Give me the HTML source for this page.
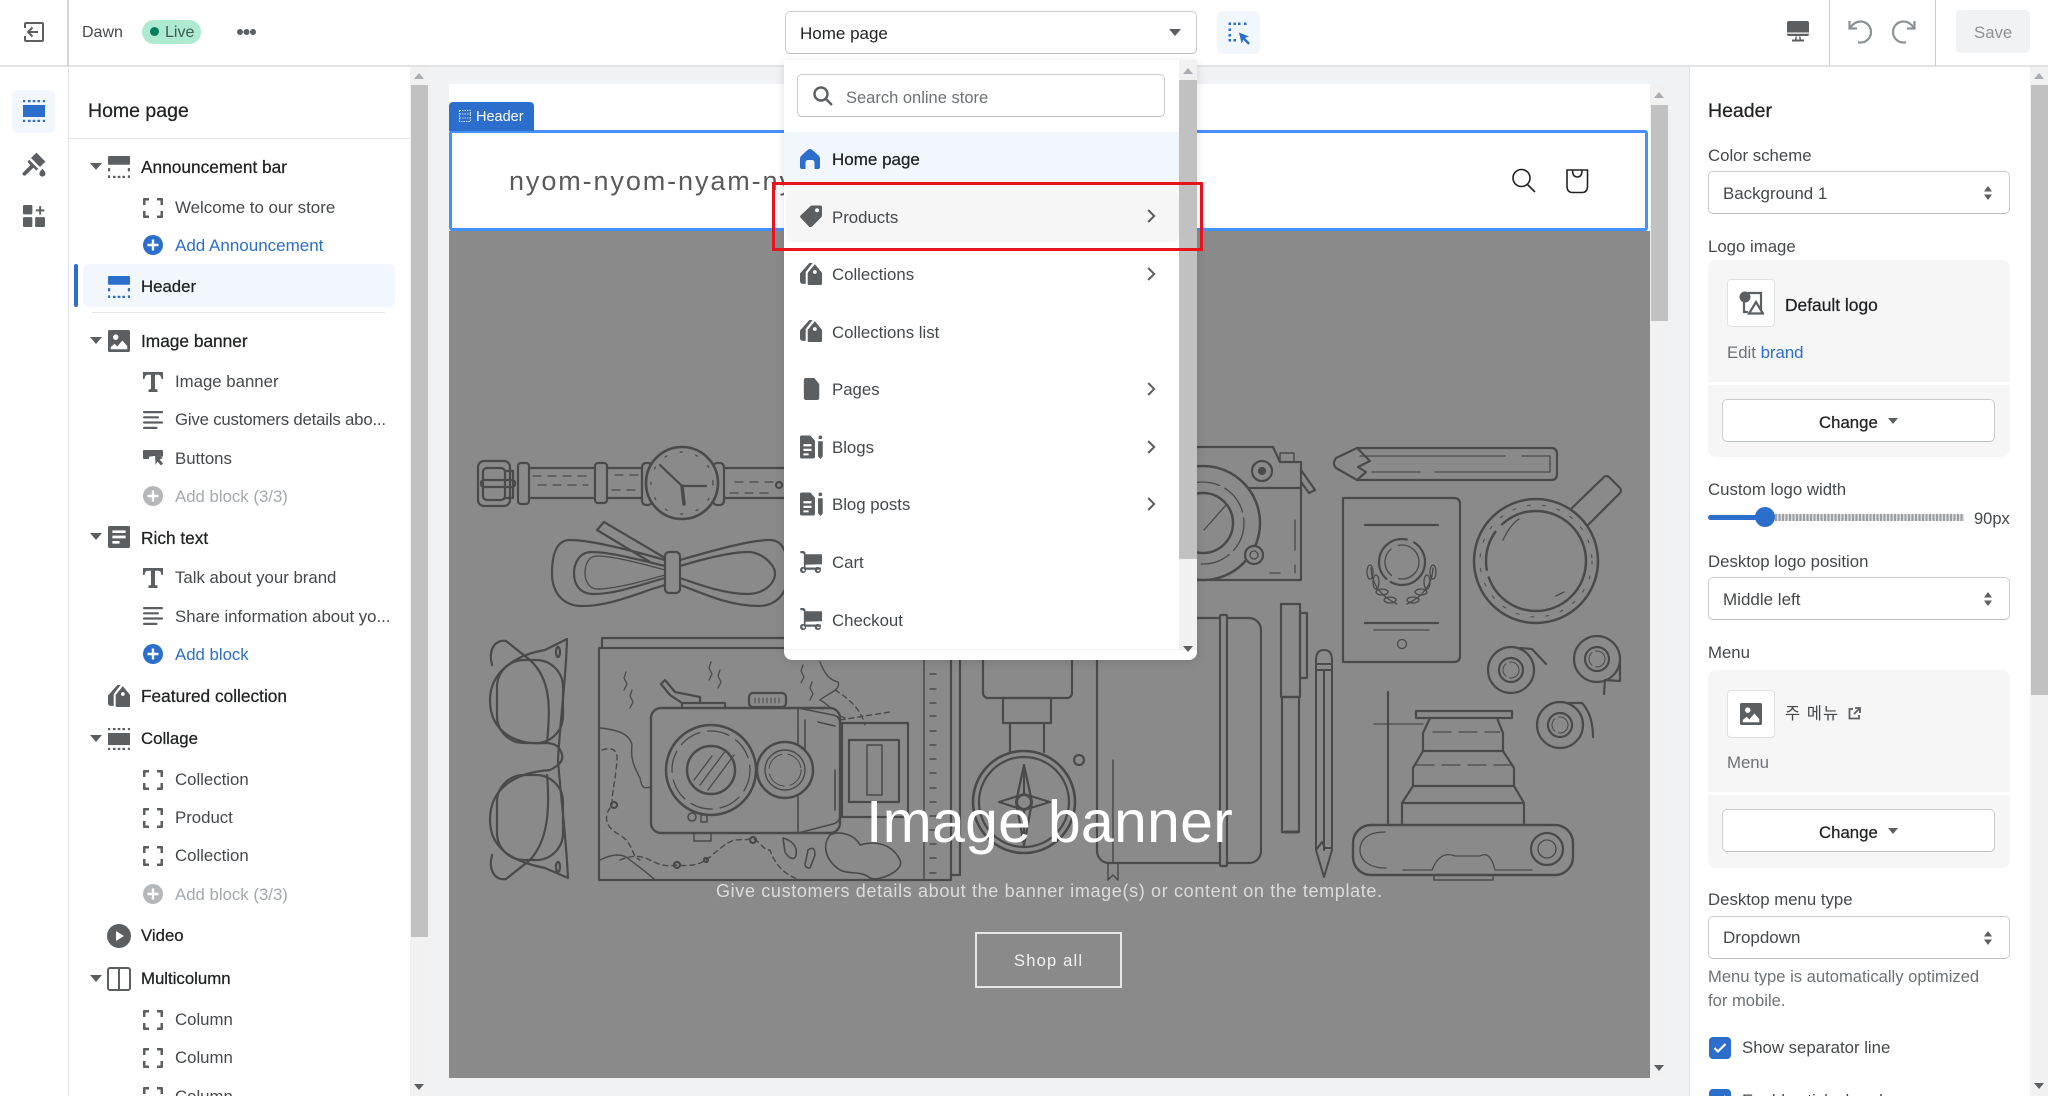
<!DOCTYPE html>
<html lang="en"><head><meta charset="utf-8"><title>Theme editor</title>
<style>
*{box-sizing:border-box}
html,body{margin:0;padding:0;width:2048px;height:1096px;overflow:hidden;background:#fff;font-family:"Liberation Sans","Noto Sans CJK KR",sans-serif;color:#202223}
body{position:relative}
.a{position:absolute}
.t{position:absolute;white-space:nowrap;line-height:20px;height:20px;margin-top:-10px;font-size:16.8px;color:#45484b}
.h{color:#202223;-webkit-text-stroke:.25px #202223;font-size:17.3px}
.b{color:#2c6ecb;font-size:17px}
.g{color:#a4a8ac}
.l{color:#45484b}
svg.i{position:absolute;fill:#5c5f62;overflow:visible}
.sel{position:absolute;background:#fff;border:1px solid #c9cccf;border-bottom-color:#babfc3;border-radius:5px}
.arr{position:absolute;width:0;height:0;border-left:6px solid transparent;border-right:6px solid transparent;border-top:7px solid #5c5f62}
.up{position:absolute;width:0;height:0;border-left:5px solid transparent;border-right:5px solid transparent;border-bottom:6px solid #a9adb1}
.dn{position:absolute;width:0;height:0;border-left:5px solid transparent;border-right:5px solid transparent;border-top:6px solid #5c5f62}
</style></head><body>
<svg width="0" height="0" style="position:absolute"><defs>
<symbol id="hdr" viewBox="0 0 20 20"><rect width="20" height="8" rx="1"/><rect y="11" width="2" height="3"/><rect x="18" y="11" width="2" height="3"/><rect y="17.5" width="2" height="2.5" rx=".7"/><rect x="4.5" y="18" width="2.4" height="2"/><rect x="8.8" y="18" width="2.4" height="2"/><rect x="13.1" y="18" width="2.4" height="2"/><rect x="18" y="17.5" width="2" height="2.5" rx=".7"/></symbol>
<symbol id="mid" viewBox="0 0 20 20"><rect y="0" width="2" height="2"/><rect x="4.5" y="0" width="2.4" height="2"/><rect x="8.8" y="0" width="2.4" height="2"/><rect x="13.1" y="0" width="2.4" height="2"/><rect x="18" y="0" width="2" height="2"/><rect y="4.5" width="20" height="11"/><rect y="18" width="2" height="2"/><rect x="4.5" y="18" width="2.4" height="2"/><rect x="8.8" y="18" width="2.4" height="2"/><rect x="13.1" y="18" width="2.4" height="2"/><rect x="18" y="18" width="2" height="2"/></symbol>
<symbol id="blk" viewBox="0 0 20 20"><path d="M0 7V1q0-1 1-1h5v2.5H2.5V7zM14 0h5q1 0 1 1v6h-2.500V2.500H14zM0 13h2.500v4.500H6V20H1q-1 0-1-1zM17.500 13H20v6q0 1-1 1h-5v-2.500h3.500z"/></symbol>
<symbol id="plus" viewBox="0 0 20 20"><path fill-rule="evenodd" d="M10 0a10 10 0 1 1 0 20a10 10 0 0 1 0-20zM8.800 4.500v4.300H4.500v2.400h4.300v4.300h2.400v-4.300h4.300V8.800h-4.300V4.500z"/></symbol>
<symbol id="img" viewBox="0 0 20 20"><path fill-rule="evenodd" d="M1.500 0h17Q20 0 20 1.500v17q0 1.500-1.500 1.500h-17Q0 20 0 18.500v-17Q0 0 1.500 0zM7 4a2.500 2.500 0 1 0 0 5a2.500 2.500 0 0 0 0-5zM2.500 17.500h15v-3L13 9.500 8.500 15 6 12.500l-3.500 3z"/></symbol>
<symbol id="T" viewBox="0 0 20 20"><path d="M0 0h20v7h-1.500q-.5-4-3-4.200H12V17l2.500.5V20h-9v-2.500L8 17V2.800H4.500q-2.500.2-3 4.200H0z"/></symbol>
<symbol id="lines" viewBox="0 0 20 20"><rect y="1" width="20" height="2.200" rx="1"/><rect y="6.200" width="16" height="2.200" rx="1"/><rect y="11.400" width="20" height="2.200" rx="1"/><rect y="16.800" width="14.500" height="2.200" rx="1"/></symbol>
<symbol id="btn" viewBox="0 0 20 20"><path d="M1 2h18q1 0 1 1v5.500l-3 .5-1.500-1.500L6 8.800V11H1q-1 0-1-1V3q0-1 1-1z"/><path d="M12 6l8 4-3.300 1.500L20 15.500 18 17.500l-3.500-4L12.500 17z"/></symbol>
<symbol id="rich" viewBox="0 0 20 20"><path fill-rule="evenodd" d="M1.500 0h17Q20 0 20 1.500v17q0 1.500-1.500 1.500h-17Q0 20 0 18.500v-17Q0 0 1.500 0zM4 4v2.400h12V4zM4 8.800v2.400h12V8.800zM4 13.600V16h6.500v-2.400z"/></symbol>
<symbol id="coll" viewBox="0 0 20 20"><path fill-rule="evenodd" d="M13.500 1L20 9v10q0 1-1 1H8q-1 0-1-1V9zM13.500 6.500a1.700 1.700 0 1 0 0 3.400a1.700 1.700 0 0 0 0-3.400z"/><path d="M8.500 0h3L5.200 8.200V19H3q-3 0-3-2.500V9.500z"/></symbol>
<symbol id="tag" viewBox="0 0 20 20"><path fill-rule="evenodd" d="M.5 9.500l9-8.500Q10 .5 11 .5h7.500Q20 .5 20 2v7.500q0 1-.7 1.700L10.500 20q-1 .7-2 0L.5 11.500q-.8-1 0-2zM15.500 3a1.800 1.800 0 1 0 0 3.600a1.800 1.800 0 0 0 0-3.600z"/></symbol>
<symbol id="page" viewBox="0 0 20 20"><path d="M3.500 2Q3.500 0 5.500 0H13l4.500 5.500V18q0 2-2 2h-10q-2 0-2-2z"/></symbol>
<symbol id="blog" viewBox="0 0 20 20"><path fill-rule="evenodd" d="M1.500 0H9l4 4.500V18.500Q13 20 11.500 20h-10Q0 20 0 18.500v-17Q0 0 1.500 0zM3 7.500v2h7v-2zM3 11.500v2h7v-2zM3 15.500v1.800h4.500v-1.800z"/><circle cx="17.700" cy="1.600" r="1.600"/><path d="M15.700 5h4.100v13l-2 2.500-2.100-2.500z"/></symbol>
<symbol id="cart" viewBox="0 0 20 20"><path d="M.3 0H3.500L5 1.500V3h15v9l-15 .5V15h14v2H3.500V3L2.500 2H.3z"/><path fill-rule="evenodd" d="M3.300 14.500a2.800 2.800 0 1 0 0 5.500a2.800 2.800 0 0 0 0-5.500zM3.300 16a1.200 1.200 0 1 1 0 2.400a1.200 1.200 0 0 1 0-2.400zM16.700 14.500a2.800 2.800 0 1 0 0 5.500a2.800 2.800 0 0 0 0-5.500zM16.700 16a1.200 1.200 0 1 1 0 2.400a1.200 1.200 0 0 1 0-2.400z"/></symbol>
<symbol id="home" viewBox="0 0 20 20"><path d="M10 0q1.500 0 3 1.500l5 4.500q2 1.500 2 4v8q0 2-2 2h-3.500v-6q0-3-2.500-3H8q-2.500 0-2.500 3v6H2q-2 0-2-2v-8q0-2.500 2-4l5-4.500Q8.500 0 10 0z"/></symbol>
<symbol id="chev" viewBox="0 0 9 14"><path d="M1.200 1l6 6-6 6" fill="none" stroke="#5c5f62" stroke-width="2"/></symbol>
<symbol id="sarr" viewBox="0 0 10 18" preserveAspectRatio="none"><path d="M5 0l5 7H0zM0 11h10l-5 7z" fill="#5c5f62"/></symbol>
</defs></svg>

<!-- preview background -->
<div class="a" style="left:428px;top:66px;width:1262px;height:1030px;background:#f1f2f4"></div>
<div class="a" style="left:449px;top:84px;width:1220px;height:994px;background:#fff;border-bottom:1px solid #d8dadc"></div>
<div class="a" style="left:449px;top:231px;width:1201px;height:847px;background:#8a8a8a"></div>

<!-- illustration -->
<svg class="a" style="left:0;top:0" width="2048" height="1096" viewBox="0 0 2048 1096" fill="none" stroke="#4a4a4a" stroke-width="2.200" stroke-linecap="round" stroke-linejoin="round">
<!-- belt and watch -->
<rect x="478" y="461" width="32" height="45" rx="6"/><rect x="483" y="468" width="22" height="32" rx="4"/><rect x="481" y="480" width="34" height="7" rx="3"/><path d="M505 471h8v27h-8"/>
<rect x="518" y="463" width="11" height="41" rx="3"/><rect x="595" y="463" width="12" height="40" rx="3"/>
<path d="M529 468h66M529 498h66M607 468h35M607 498h35M724 468h66M724 498h66"/>
<path d="M533 476h60M538 485h50M615 475h25M612 490h25M735 482h40M730 493h40" stroke-width="1.300" stroke-dasharray="8 7"/>
<rect x="642" y="463" width="10" height="42" rx="4"/><rect x="713" y="463" width="11" height="42" rx="4"/>
<circle cx="682" cy="483" r="36" stroke-width="2.600" fill="#8a8a8a"/><circle cx="682" cy="483" r="31" stroke-width="1.300" stroke-dasharray="2 14"/>
<path d="M660 465l22 21h24" /><path d="M682 486l2 18" stroke-width="3.500"/><circle cx="779" cy="485" r="3"/>
<!-- bow -->
<path d="M665 560C630 550 590 540 570 540C555 540 552 558 552 573C552 595 565 606 582 606C612 606 640 592 665 585"/>
<path d="M665 566C640 560 610 552 592 552C578 552 574 565 574 573C574 585 580 594 594 594C615 594 640 585 665 578"/>
<path d="M665 570C640 563 612 556 597 556C588 556 585 565 585 573C585 582 590 589 597 589C615 589 640 582 665 575" stroke-width="1.300"/>
<path d="M680 560C715 550 750 540 770 540C785 540 788 558 788 573C788 595 775 606 758 606C728 606 700 592 680 585"/>
<path d="M680 566C700 560 730 552 748 552C762 552 775 565 775 573C775 585 762 594 748 594C725 594 700 585 680 578"/>
<rect x="665" y="552" width="15" height="41" rx="4" fill="#8a8a8a"/>
<path d="M665 558L604 522L597 530L650 562"/>
<!-- glasses -->
<path d="M567 639L545 650C515 655 490 672 490 700C490 735 520 745 545 743C553 743 558 745 560 750C565 758 562 764 550 770C520 772 490 785 490 820C490 850 515 862 545 868L568 878C566 835 560 790 558 760C560 720 566 680 567 639Z"/>
<rect x="497" y="660" width="66" height="83" rx="27"/><rect x="497" y="775" width="66" height="85" rx="27"/>
<path d="M506 641C495 639 488 650 492 665M506 641L530 660C552 680 550 710 547 743M506 879C495 881 488 870 492 855M506 879L530 860C548 840 550 810 547 775"/>
<ellipse cx="558" cy="652" rx="2" ry="5"/><ellipse cx="558" cy="867" rx="2" ry="5"/>
<!-- map notebook -->
<rect x="599" y="648" width="352" height="232"/><path d="M602 648V638H960V875H951"/><path d="M924 648V880" stroke-width="1.500"/>
<path d="M930 674h6M930 689h6M930 703h6M930 716h6M930 731h6M930 745h6M930 759h6M930 773h6M930 788h6M930 802h6M930 816h6M930 830h6M930 844h6M930 858h6M930 873h6" stroke-width="1.500"/>
<path d="M626 672l-2 6 3 6-3 6M632 690l-2 6 3 6-3 6M711 662l-2 6 3 6-3 6M720 670l-2 6 3 6-3 6M803 665l-2 6 3 6-3 6M812 682l-2 6 3 6-3 6" stroke-width="1.300"/>
<path d="M600 728C620 730 630 735 632 745C630 760 635 768 640 778C642 790 645 788 651 787M600 860Q620 850 630 860Q650 875 655 880M820 662C825 675 830 680 838 682C842 690 825 695 820 700C830 705 835 715 845 718" stroke-width="1.400"/>
<path d="M602 750Q618 745 617 760C615 785 612 790 612 805C600 820 610 830 620 835C635 845 630 855 640 860M620 860C650 848 650 870 677 865Q700 868 712 855C725 845 730 838 745 840C760 835 760 850 770 850C775 865 785 875 800 880M835 690Q860 705 865 725M840 720L890 712" stroke-width="1.400" stroke-dasharray="5 4"/>
<path d="M783 838C790 840 798 845 796 855C795 860 790 860 785 852ZM808 850Q815 845 815 855L810 868Q803 868 806 860ZM830 835C840 830 855 835 860 845C870 842 890 840 900 860C905 870 880 882 870 878C860 870 850 875 840 870C825 860 822 845 830 835Z" stroke-width="1.600"/>
<circle cx="614" cy="805" r="3"/><circle cx="677" cy="865" r="3"/><circle cx="706" cy="860" r="2"/><circle cx="753" cy="840" r="3"/>
<!-- camera left -->
<rect x="651" y="708" width="189" height="125" rx="10" stroke-width="2.400" fill="#8a8a8a"/>
<path d="M798 708L833 715Q840 716 840 725V815Q840 822 833 824L798 833V708M805 720V770M818 722L835 726M835 770V810" stroke-width="1.600"/>
<path d="M682 708V703H725V708M682 703L670 695L661 684L665 680L675 692L700 697V703"/>
<rect x="749" y="693" width="37" height="14" rx="4"/><path d="M755 698v5M759 698v5M763 698v5M767 698v5M771 698v5M775 698v5M779 698v5" stroke-width="1"/>
<circle cx="711" cy="770" r="45" stroke-width="2.500" fill="#8a8a8a"/><circle cx="711" cy="770" r="39" stroke-width="1.300" stroke-dasharray="22 8"/><circle cx="711" cy="770" r="24" stroke-width="2.500"/>
<path d="M700 785L726 750M708 790L734 755M694 780L712 756" stroke-width="1.300"/>
<circle cx="785" cy="770" r="28" stroke-width="2.500" fill="#8a8a8a"/><circle cx="785" cy="770" r="20" stroke-width="1.400"/><circle cx="785" cy="770" r="16" stroke-width="1" stroke-dasharray="20 6"/>
<rect x="842" y="723" width="66" height="94"/><rect x="849" y="740" width="50" height="62"/><rect x="867" y="745" width="15" height="50" stroke-width="1.500"/>
<rect x="694" y="833" width="17" height="8" stroke-width="1.500"/><circle cx="692" cy="817" r="4" stroke-width="1.500"/><rect x="701" y="815" width="6" height="7" stroke-width="1.500"/>
<!-- flashlight & compass -->
<rect x="983" y="655" width="89" height="43" rx="5"/><rect x="1003" y="698" width="48" height="25"/><path d="M1010 723V752M1044 723V752" />
<circle cx="1024" cy="802" r="51" stroke-width="2.600" fill="#8a8a8a"/><circle cx="1024" cy="802" r="45"/>
<path d="M1024 765L1032 802L1024 845L1016 802ZM1024 765V845" /><path d="M999 802L1024 794L1050 802L1024 810Z"/><circle cx="1024" cy="802" r="7" fill="#8a8a8a"/><circle cx="1079" cy="760" r="5"/>
<!-- notebook -->
<rect x="1097" y="618" width="164" height="245" rx="12"/><rect x="1220" y="615" width="7" height="251" rx="1" fill="#8a8a8a"/><path d="M1108 863V880L1113 875L1118 880V863M1113 760V863" stroke-width="1.500"/>
<!-- pen & pencil -->
<rect x="1281" y="604" width="19" height="93"/><rect x="1282" y="697" width="17" height="135"/><rect x="1300" y="613" width="7" height="65"/><path d="M1285 832h13" stroke-width="3"/>
<path d="M1316 660Q1316 650 1324 650Q1332 650 1332 660V850L1324 877L1316 850ZM1316 664H1332M1316 670H1332M1324 670V850M1316 850L1322 842L1325 848L1332 848" stroke-width="2"/>
<!-- long pencil -->
<path d="M1357 448H1551Q1557 448 1557 454V474Q1557 480 1551 480H1357L1336 468Q1332 464 1336 458Z"/><path d="M1357 448L1370 461L1358 467L1366 472L1357 480"/><path d="M1360 456H1505M1522 456H1550V472H1435M1420 472H1372" stroke-width="1.300"/>
<!-- passport -->
<path d="M1343 498H1454Q1460 498 1460 504V656Q1460 662 1454 662H1343Z"/><path d="M1365 525H1438M1365 623H1438" /><path d="M1374 630H1429" stroke-width="1.300"/><circle cx="1402" cy="644" r="4.500" stroke-width="1.300"/>
<circle cx="1402" cy="562" r="23" stroke-dasharray="48 5 60 8"/><circle cx="1402" cy="562" r="17" stroke-width="1.300" stroke-dasharray="30 8"/>
<path d="M1371 568Q1372 592 1397 604M1433 568Q1432 592 1407 604" stroke-width="1.300"/>
<g stroke-width="1.300"><ellipse cx="1370" cy="572" rx="3" ry="7"/><ellipse cx="1376" cy="582" rx="3" ry="7"/><ellipse cx="1382" cy="592" rx="6" ry="3"/><ellipse cx="1390" cy="600" rx="6" ry="3"/><ellipse cx="1433" cy="572" rx="3" ry="7"/><ellipse cx="1427" cy="582" rx="3" ry="7"/><ellipse cx="1421" cy="592" rx="6" ry="3"/><ellipse cx="1413" cy="600" rx="6" ry="3"/></g>
<!-- mug -->
<path d="M1572 508L1604 477Q1606 475 1609 477L1620 488Q1622 491 1620 493L1588 525"/><circle cx="1536" cy="561" r="62" stroke-width="2.500"/><circle cx="1536" cy="561" r="50" stroke-width="2.500" stroke-dasharray="140 8 40 10"/><circle cx="1536" cy="561" r="56" stroke-width="1" stroke-dasharray="3 12"/>
<path d="M1503 540Q1510 525 1519 519M1556 596L1564 592" stroke-width="1.300"/>
<!-- tape rolls -->
<circle cx="1511" cy="670" r="23"/><circle cx="1511" cy="670" r="12"/><circle cx="1511" cy="670" r="8" stroke-width="1" stroke-dasharray="14 4"/><path d="M1520 648L1532 649L1546 664"/>
<circle cx="1597" cy="659" r="23"/><circle cx="1597" cy="659" r="12"/><circle cx="1597" cy="659" r="8" stroke-width="1" stroke-dasharray="14 4"/><path d="M1620 660L1620 681L1605 680L1604 694"/>
<circle cx="1560" cy="725" r="23"/><circle cx="1560" cy="725" r="12"/><circle cx="1560" cy="725" r="8" stroke-width="1" stroke-dasharray="14 4"/><path d="M1569 703L1582 703Q1593 715 1593 737"/>
<!-- lens camera -->
<rect x="1353" y="825" width="220" height="50" rx="18" stroke-width="2.400"/>
<path d="M1416 711H1512V718H1416ZM1430 718L1423 733V751H1503V733L1497 718M1423 751L1413 768V786H1514V768L1503 751M1413 786L1402 803V825M1514 786L1524 803V825M1402 803H1524" /><path d="M1433 732H1500M1416 765H1512" stroke-width="1.200" stroke-dasharray="18 8"/>
<path d="M1388 692V825" /><path d="M1374 724H1423" stroke-width="1.200"/>
<circle cx="1547" cy="849" r="16"/><circle cx="1547" cy="849" r="9" stroke-width="1.300"/>
<path d="M1385 832C1365 832 1360 842 1360 850C1360 862 1372 868 1385 868H1386M1403 870H1432Q1440 850 1455 856H1480Q1490 850 1495 870H1532" stroke-width="1.300"/>
<path d="M1434 875H1493V880H1434Z" stroke-width="1.500"/>
<!-- camera right -->
<path d="M1197 447H1273L1280 462H1301V580H1197M1197 488H1301"/><rect x="1280" y="453" width="14" height="9" stroke-width="1.500"/><circle cx="1262" cy="471" r="10"/><circle cx="1262" cy="471" r="3" fill="#4a4a4a"/><path d="M1301 470L1315 490L1309 493L1301 482"/>
<circle cx="1203" cy="523" r="57" stroke-width="2.500" fill="#8a8a8a"/><circle cx="1203" cy="523" r="41" stroke-width="1.300" stroke-dasharray="30 6"/><circle cx="1203" cy="523" r="30" stroke-width="2.500"/><circle cx="1254" cy="555" r="9" fill="#8a8a8a"/><circle cx="1254" cy="555" r="4" stroke-width="1.300"/>
<path d="M1204 530L1226 505" stroke-width="1.300"/><path d="M1295 520V550M1295 565v8M1270 573h10" stroke-width="1.300"/>
</svg>

<!-- banner text -->
<div class="t" style="left:866px;top:822px;height:70px;line-height:70px;margin-top:-35px;font-size:59px;color:#fff;letter-spacing:.25px;font-weight:400">Image banner</div>
<div class="t" style="left:716px;top:891px;font-size:18px;color:#dcdcdc;letter-spacing:.65px">Give customers details about the banner image(s) or content on the template.</div>
<div class="a" style="left:975px;top:932px;width:147px;height:56px;border:2px solid #e6e6e6"></div>
<div class="t" style="left:1014px;top:961px;font-size:16.500px;color:#f2f2f2;letter-spacing:1.200px">Shop all</div>

<!-- preview scrollbar -->
<div class="a" style="left:1650px;top:84px;width:19px;height:994px;background:#f1f1f1"></div>
<div class="a" style="left:1651px;top:105px;width:17px;height:216px;background:#c1c1c1"></div>
<div class="up" style="left:1654px;top:92px"></div><div class="dn" style="left:1654px;top:1065px"></div>

<!-- header section -->
<div class="a" style="left:449px;top:130px;width:1199px;height:101px;background:#fff;border:3px solid #458fff;border-radius:3px"></div>
<div class="a" style="left:449px;top:102px;width:85px;height:29px;background:#2c6ecb;border-radius:4px 4px 0 0"></div>
<svg class="a" style="left:459px;top:110px" width="12" height="12" viewBox="0 0 12 12" fill="none" stroke="#cfe0f7" stroke-width="1.100" stroke-dasharray="1.500 1"><rect x=".5" y=".5" width="11" height="11"/><path d="M.5 4h11M.5 8h11"/></svg>
<div class="t" style="left:476px;top:117px;font-size:14.500px;color:#fff">Header</div>
<div class="t" style="left:509px;top:181px;font-size:27px;height:34px;line-height:34px;margin-top:-17px;color:#5a5a5a;letter-spacing:1.900px">nyom-nyom-nyam-nyam</div>
<svg class="a" style="left:1511px;top:168px" width="25" height="25" viewBox="0 0 25 25" fill="none" stroke="#222" stroke-width="1.600"><circle cx="10.500" cy="10" r="8.500"/><path d="M16.500 16.500l7.500 7.500"/></svg>
<svg class="a" style="left:1565px;top:168px" width="25" height="26" viewBox="0 0 25 26" fill="none" stroke="#222" stroke-width="1.600"><path d="M2 2H22.500V18Q22.500 24.500 17 24.500H7.500Q2 24.500 2 18Z"/><path d="M7.500 2Q7.500 9 12.500 9Q17 9 17 2"/></svg>

<!-- top bar -->
<div class="a" style="left:0;top:0;width:2048px;height:67px;background:#fff;border-bottom:2px solid #e1e3e5"></div>
<div class="a" style="left:67px;top:0;width:2px;height:66px;background:#d2d5d8"></div>
<svg class="a" style="left:24px;top:22px" width="20" height="20" viewBox="0 0 20 20" fill="none" stroke="#5c5f62" stroke-width="2"><path d="M1 6V2q0-1 1-1h16q1 0 1 1v16q0 1-1 1H2q-1 0-1-1v-4"/><path d="M14 10H4M8.500 5.500L4 10l4.500 4.500"/></svg>
<div class="t" style="left:82px;top:33px;font-size:16px">Dawn</div>
<div class="a" style="left:142px;top:20px;width:59px;height:24px;background:#aee9d1;border-radius:12px"></div>
<div class="a" style="left:150px;top:27px;width:9px;height:9px;background:#007f5f;border-radius:50%"></div>
<div class="t" style="left:165px;top:33px;font-size:16px;color:#3f5a50">Live</div>
<svg class="a" style="left:236px;top:28px" width="21" height="8" fill="#5c5f62"><circle cx="4" cy="4" r="3"/><circle cx="10.500" cy="4" r="3"/><circle cx="17" cy="4" r="3"/></svg>

<div class="a" style="left:1829px;top:0;width:1px;height:66px;background:#c9cccf"></div>
<div class="a" style="left:1935px;top:0;width:1px;height:66px;background:#c9cccf"></div>
<svg class="i" style="left:1787px;top:21px" width="22" height="22" viewBox="0 0 22 22"><path fill-rule="evenodd" d="M2 0h18q2 0 2 2v11q0 2-2 2H2q-2 0-2-2V2q0-2 2-2zM0 11.500v1.200h22v-1.200z"/><path d="M8.500 15.500h1.500l-.5 3h3l-.5-3h1.500l.5 3H17v2H5v-2h3z"/></svg>
<svg class="a" style="left:1848px;top:20px" width="26" height="24" viewBox="0 0 26 24" fill="none" stroke="#8c9196" stroke-width="2.200"><path d="M1.500 1v7.500H9"/><path d="M2 8C5 3.500 9 1.500 12.500 1.500a10.500 10.500 0 0 1 0 21H10"/></svg>
<svg class="a" style="left:1890px;top:20px" width="26" height="24" viewBox="0 0 26 24" fill="none" stroke="#8c9196" stroke-width="2.200"><path d="M24.500 1v7.500H17"/><path d="M24 8C21 3.500 17 1.500 13.500 1.500a10.500 10.500 0 0 0 0 21H16"/></svg>
<div class="a" style="left:1956px;top:10px;width:74px;height:43px;background:#f1f2f3;border-radius:5px"></div>
<div class="t" style="left:1974px;top:33px;font-size:16.800px;color:#8c9196">Save</div>

<!-- left rail -->
<div class="a" style="left:12px;top:90px;width:43px;height:43px;background:#f2f7fe;border-radius:6px"></div>
<svg class="i" style="left:23px;top:100px;fill:#2c6ecb" width="22" height="22"><use href="#mid"/></svg>
<svg class="i" style="left:22px;top:152px" width="24" height="24" viewBox="0 0 20 20"><path d="M7.500 5L12 .5 19.500 8 15 12.500z"/><path d="M6 6.500L13.500 14 12 15.500 9.500 13 3 19.500Q1.500 20 .5 19 0 18 1 17L7 11 4.500 8z"/><path d="M17 14q2.500 2.500 2.500 4a2.500 2.500 0 0 1-5 0q0-1.500 2.500-4z"/></svg>
<svg class="i" style="left:23px;top:205px" width="22" height="22" viewBox="0 0 20 20"><rect width="8.500" height="8.500" rx="1"/><rect y="11" width="8.500" height="9" rx="1"/><rect x="11" y="11" width="9" height="9" rx="1"/><path d="M14.700 1h1.800v3h3v1.800h-3v3h-1.800v-3h-3V4h3z"/></svg>

<!-- left panel -->
<div class="a" style="left:68px;top:67px;width:360px;height:1029px;background:#fff;border-left:1px solid #e1e3e5"></div>
<div class="t h" style="left:88px;top:111px;font-size:19.500px">Home page</div>
<div class="a" style="left:69px;top:138px;width:341px;height:1px;background:#e1e3e5"></div>

<div class="arr" style="left:90px;top:163px"></div><svg class="i" style="left:108px;top:156px" width="22" height="22"><use href="#hdr"/></svg><div class="t h" style="left:141px;top:167px">Announcement bar</div>
<svg class="i" style="left:143px;top:198px" width="20" height="20"><use href="#blk"/></svg><div class="t" style="left:175px;top:208px;font-size:16.900px">Welcome to our store</div>
<svg class="i" style="left:143px;top:235px;fill:#2c6ecb" width="20" height="20"><use href="#plus"/></svg><div class="t b" style="left:175px;top:246px">Add Announcement</div>
<div class="a" style="left:83px;top:264px;width:312px;height:43px;background:#f2f7fe;border-radius:6px"></div><div class="a" style="left:74px;top:264px;width:3.500px;height:43px;background:#2c6ecb;border-radius:2px"></div>
<svg class="i" style="left:108px;top:276px;fill:#2c6ecb" width="22" height="22"><use href="#hdr"/></svg><div class="t h" style="left:141px;top:287px;font-size:16.800px">Header</div>
<div class="a" style="left:92px;top:312px;width:293px;height:1px;background:#e1e3e5"></div>
<div class="arr" style="left:90px;top:337px"></div><svg class="i" style="left:108px;top:330px" width="22" height="22"><use href="#img"/></svg><div class="t h" style="left:141px;top:341px">Image banner</div>
<svg class="i" style="left:143px;top:372px" width="20" height="20"><use href="#T"/></svg><div class="t" style="left:175px;top:382px">Image banner</div>
<svg class="i" style="left:143px;top:410px" width="20" height="20"><use href="#lines"/></svg><div class="t" style="left:175px;top:420px;letter-spacing:-.19px">Give customers details abo...</div>
<svg class="i" style="left:143px;top:448px" width="20" height="20"><use href="#btn"/></svg><div class="t" style="left:175px;top:459px">Buttons</div>
<svg class="i" style="left:143px;top:486px;fill:#b5b8bb" width="20" height="20"><use href="#plus"/></svg><div class="t g" style="left:175px;top:497px">Add block (3/3)</div>
<div class="arr" style="left:90px;top:533px"></div><svg class="i" style="left:108px;top:526px" width="22" height="22"><use href="#rich"/></svg><div class="t h" style="left:141px;top:538px">Rich text</div>
<svg class="i" style="left:143px;top:568px" width="20" height="20"><use href="#T"/></svg><div class="t" style="left:175px;top:578px">Talk about your brand</div>
<svg class="i" style="left:143px;top:606px" width="20" height="20"><use href="#lines"/></svg><div class="t" style="left:175px;top:617px">Share information about yo...</div>
<svg class="i" style="left:143px;top:644px;fill:#2c6ecb" width="20" height="20"><use href="#plus"/></svg><div class="t b" style="left:175px;top:655px;font-size:16.800px">Add block</div>
<svg class="i" style="left:108px;top:684px" width="22" height="24"><use href="#coll"/></svg><div class="t h" style="left:141px;top:696px">Featured collection</div>
<div class="arr" style="left:90px;top:735px"></div><svg class="i" style="left:108px;top:728px" width="22" height="22"><use href="#mid"/></svg><div class="t h" style="left:141px;top:739px;font-size:16.800px">Collage</div>
<svg class="i" style="left:143px;top:770px" width="20" height="20"><use href="#blk"/></svg><div class="t" style="left:175px;top:780px">Collection</div>
<svg class="i" style="left:143px;top:808px" width="20" height="20"><use href="#blk"/></svg><div class="t" style="left:175px;top:818px">Product</div>
<svg class="i" style="left:143px;top:846px" width="20" height="20"><use href="#blk"/></svg><div class="t" style="left:175px;top:856px">Collection</div>
<svg class="i" style="left:143px;top:884px;fill:#b5b8bb" width="20" height="20"><use href="#plus"/></svg><div class="t g" style="left:175px;top:895px">Add block (3/3)</div>
<svg class="i" style="left:107px;top:924px" width="24" height="24" viewBox="0 0 24 24"><path fill-rule="evenodd" d="M12 0a12 12 0 1 1 0 24a12 12 0 0 1 0-24zM9 7v10l8-5z"/></svg><div class="t h" style="left:141px;top:936px;font-size:16.800px">Video</div>
<div class="arr" style="left:90px;top:975px"></div><svg class="a" style="left:107px;top:967px" width="24" height="24" viewBox="0 0 24 24" fill="none" stroke="#5c5f62" stroke-width="2"><rect x="1" y="1" width="22" height="22" rx="2"/><path d="M12 1v22"/></svg><div class="t h" style="left:141px;top:979px;font-size:16.800px">Multicolumn</div>
<svg class="i" style="left:143px;top:1010px" width="20" height="20"><use href="#blk"/></svg><div class="t" style="left:175px;top:1020px">Column</div>
<svg class="i" style="left:143px;top:1048px" width="20" height="20"><use href="#blk"/></svg><div class="t" style="left:175px;top:1058px">Column</div>
<svg class="i" style="left:143px;top:1087px" width="20" height="20"><use href="#blk"/></svg><div class="t" style="left:175px;top:1097px">Column</div>
<div class="a" style="left:410px;top:67px;width:18px;height:1029px;background:#f1f1f1"></div>
<div class="a" style="left:411px;top:85px;width:17px;height:852px;background:#c1c1c1"></div>
<div class="up" style="left:414px;top:73px"></div><div class="dn" style="left:414px;top:1084px"></div>

<!-- right panel -->
<div class="a" style="left:1689px;top:67px;width:359px;height:1029px;background:#fff;border-left:1px solid #e1e3e5"></div>
<div class="a" style="left:2030px;top:67px;width:18px;height:1029px;background:#f1f1f1"></div>
<div class="a" style="left:2031px;top:85px;width:17px;height:610px;background:#c1c1c1"></div>
<div class="up" style="left:2034px;top:73px"></div><div class="dn" style="left:2034px;top:1083px"></div>
<div class="t h" style="left:1708px;top:111px;font-size:19.500px">Header</div>
<div class="t" style="left:1708px;top:156px">Color scheme</div>
<div class="sel" style="left:1708px;top:171px;width:302px;height:43px"></div><div class="t" style="left:1723px;top:194px;font-size:16.900px">Background 1</div><svg class="a" style="left:1984px;top:186px" width="8" height="14"><use href="#sarr"/></svg>
<div class="t" style="left:1708px;top:247px">Logo image</div>
<div class="a" style="left:1708px;top:260px;width:302px;height:122px;background:#f6f6f7;border-radius:8px 8px 0 0"></div>
<div class="a" style="left:1727px;top:279px;width:48px;height:48px;background:#fff;border:1px solid #dfe1e3;border-radius:4px"></div>
<svg class="a" style="left:1739px;top:291px" width="25" height="24" viewBox="0 0 25 24"><path d="M9 2H22V21H13M5 9V21H9" fill="none" stroke="#5c5f62" stroke-width="2.200"/><circle cx="6" cy="6" r="5.500" fill="#5c5f62"/><path d="M17 11L24 22.500H10z" fill="#f8f8f8" stroke="#5c5f62" stroke-width="2.200"/></svg>
<div class="t h" style="left:1785px;top:305px;font-size:17.400px">Default logo</div>
<div class="t" style="left:1727px;top:353px;color:#6d7175">Edit <span style="color:#2c6ecb">brand</span></div>
<div class="a" style="left:1708px;top:385px;width:302px;height:72px;background:#f6f6f7;border-radius:0 0 8px 8px"></div>
<div class="sel" style="left:1722px;top:399px;width:273px;height:43px"></div>
<div class="t h" style="left:1819px;top:423px;font-size:16.800px">Change</div><div class="arr" style="left:1888px;top:418px;border-left-width:5px;border-right-width:5px;border-top-width:6px"></div>
<div class="t" style="left:1708px;top:490px">Custom logo width</div>
<div class="a" style="left:1708px;top:515px;width:58px;height:5px;background:#2c6ecb;border-radius:3px"></div>
<div class="a" style="left:1775px;top:514px;width:189px;height:7px;background:repeating-linear-gradient(90deg,#9a9da1 0 2px,#dfe0e2 2px 3.500px)"></div>
<div class="a" style="left:1755px;top:507px;width:20px;height:20px;background:#2c6ecb;border-radius:50%"></div>
<div class="t" style="left:1974px;top:519px;font-size:16.500px">90px</div>
<div class="t" style="left:1708px;top:562px">Desktop logo position</div>
<div class="sel" style="left:1708px;top:577px;width:302px;height:43px"></div><div class="t" style="left:1723px;top:600px;font-size:17px">Middle left</div><svg class="a" style="left:1984px;top:592px" width="8" height="14"><use href="#sarr"/></svg>
<div class="t" style="left:1708px;top:653px">Menu</div>
<div class="a" style="left:1708px;top:670px;width:302px;height:122px;background:#f6f6f7;border-radius:8px 8px 0 0"></div>
<div class="a" style="left:1727px;top:690px;width:48px;height:48px;background:#fff;border:1px solid #dfe1e3;border-radius:4px"></div>
<svg class="i" style="left:1740px;top:703px" width="22" height="22"><use href="#img"/></svg>
<div class="t" style="left:1785px;top:714px;font-size:16.500px;letter-spacing:1px">주 메뉴</div>
<svg class="a" style="left:1848px;top:707px" width="13" height="13" viewBox="0 0 13 13" fill="none" stroke="#5c5f62" stroke-width="1.800"><path d="M5 2H1.500V11.500H11V8M7 1H12V6M12 1L6 7"/></svg>
<div class="t" style="left:1727px;top:763px;color:#6d7175">Menu</div>
<div class="a" style="left:1708px;top:795px;width:302px;height:73px;background:#f6f6f7;border-radius:0 0 8px 8px"></div>
<div class="sel" style="left:1722px;top:809px;width:273px;height:43px"></div>
<div class="t h" style="left:1819px;top:833px;font-size:16.800px">Change</div><div class="arr" style="left:1888px;top:828px;border-left-width:5px;border-right-width:5px;border-top-width:6px"></div>
<div class="t" style="left:1708px;top:900px">Desktop menu type</div>
<div class="sel" style="left:1708px;top:916px;width:302px;height:43px"></div><div class="t" style="left:1723px;top:938px;font-size:17px">Dropdown</div><svg class="a" style="left:1984px;top:931px" width="8" height="14"><use href="#sarr"/></svg>
<div class="t" style="left:1708px;top:977px;color:#6d7175;font-size:16.600px">Menu type is automatically optimized</div>
<div class="t" style="left:1708px;top:1001px;color:#6d7175;font-size:16.600px">for mobile.</div>
<div class="a" style="left:1709px;top:1037px;width:22px;height:22px;background:#2c6ecb;border-radius:4px"></div>
<svg class="a" style="left:1713px;top:1042px" width="14" height="12" fill="none" stroke="#fff" stroke-width="2.200"><path d="M1.500 6l3.500 3.500L12.500 2"/></svg>
<div class="t" style="left:1742px;top:1048px">Show separator line</div>
<div class="a" style="left:1709px;top:1089px;width:22px;height:22px;background:#2c6ecb;border-radius:4px"></div>
<svg class="a" style="left:1713px;top:1094px" width="14" height="12" fill="none" stroke="#fff" stroke-width="2.200"><path d="M1.500 6l3.500 3.500L12.500 2"/></svg>
<div class="t" style="left:1742px;top:1101px">Enable sticky header</div>

<!-- center top controls -->
<div class="sel" style="left:785px;top:11px;width:412px;height:43px"></div>
<div class="t" style="left:800px;top:34px;font-size:17px;color:#202223">Home page</div>
<div class="arr" style="left:1169px;top:29px;border-top-color:#5c5f62;border-top-width:7px"></div>
<div class="a" style="left:1217px;top:11px;width:43px;height:43px;background:#f2f7fe;border-radius:6px"></div>
<svg class="a" style="left:1228px;top:22px" width="23" height="23" viewBox="0 0 23 23" fill="#2c6ecb"><rect x=".5" y=".5" width="2.500" height="2.500"/><rect x="5.500" y=".5" width="2.500" height="2.500"/><rect x="10" y=".5" width="2.500" height="2.500"/><rect x="16" y=".5" width="2.500" height="2.500"/><rect x=".5" y="6.500" width="2.500" height="2.500"/><rect x=".5" y="12" width="2.500" height="2.500"/><rect x=".5" y="17" width="2.500" height="2.500"/><rect x="5.500" y="17" width="2.500" height="2.500"/><path d="M11 10.500l10 4-4 1.500 5 5-1.800 1.800-5-5-1.500 4z"/></svg>

<!-- dropdown -->
<div class="a" style="left:784px;top:60px;width:413px;height:600px;background:#fff;border-radius:0 0 8px 8px;box-shadow:0 2px 10px rgba(0,0,0,.12)"></div>
<div class="a" style="left:1179px;top:60px;width:18px;height:590px;background:#f1f1f1"></div>
<div class="a" style="left:1179px;top:80px;width:18px;height:479px;background:#c1c1c1"></div>
<div class="up" style="left:1183px;top:68px"></div><div class="dn" style="left:1183px;top:646px"></div>
<div class="a" style="left:784px;top:649px;width:395px;height:1px;background:#f1f2f3"></div>
<div class="sel" style="left:797px;top:74px;width:368px;height:43px"></div>
<svg class="a" style="left:813px;top:86px" width="20" height="20" viewBox="0 0 20 20" fill="none" stroke="#5c5f62" stroke-width="2.400"><circle cx="8" cy="8" r="6.500"/><path d="M13 13l6 6"/></svg>
<div class="t" style="left:846px;top:98px;font-size:16.500px;color:#6d7175">Search online store</div>
<div class="a" style="left:784px;top:132px;width:395px;height:55px;background:#f2f7fe"></div>
<div class="a" style="left:786px;top:190px;width:393px;height:52px;background:#f6f6f7;border-radius:6px"></div>
<svg class="i" style="left:800px;top:148px;fill:#2c6ecb" width="20" height="22"><use href="#home"/></svg><div class="t h" style="left:832px;top:160px;font-size:17px">Home page</div>
<svg class="i" style="left:800px;top:205px" width="22" height="22"><use href="#tag"/></svg><div class="t" style="left:832px;top:218px">Products</div><svg class="a" style="left:1147px;top:209px" width="9" height="14"><use href="#chev"/></svg>
<svg class="i" style="left:800px;top:262px" width="22" height="24"><use href="#coll"/></svg><div class="t" style="left:832px;top:275px">Collections</div><svg class="a" style="left:1147px;top:267px" width="9" height="14"><use href="#chev"/></svg>
<svg class="i" style="left:800px;top:319px" width="22" height="24"><use href="#coll"/></svg><div class="t" style="left:832px;top:333px">Collections list</div>
<svg class="i" style="left:800px;top:377px" width="22" height="24"><use href="#page"/></svg><div class="t" style="left:832px;top:390px">Pages</div><svg class="a" style="left:1147px;top:382px" width="9" height="14"><use href="#chev"/></svg>
<svg class="i" style="left:800px;top:435px" width="23" height="24"><use href="#blog"/></svg><div class="t" style="left:832px;top:448px">Blogs</div><svg class="a" style="left:1147px;top:440px" width="9" height="14"><use href="#chev"/></svg>
<svg class="i" style="left:800px;top:492px" width="23" height="24"><use href="#blog"/></svg><div class="t" style="left:832px;top:505px">Blog posts</div><svg class="a" style="left:1147px;top:497px" width="9" height="14"><use href="#chev"/></svg>
<svg class="i" style="left:800px;top:550px" width="22" height="24"><use href="#cart"/></svg><div class="t" style="left:832px;top:563px">Cart</div>
<svg class="i" style="left:800px;top:607px" width="22" height="24"><use href="#cart"/></svg><div class="t" style="left:832px;top:621px">Checkout</div>

<!-- red highlight -->
<div class="a" style="left:772px;top:182px;width:431px;height:69px;border:3px solid #e8141c"></div>
</body></html>
